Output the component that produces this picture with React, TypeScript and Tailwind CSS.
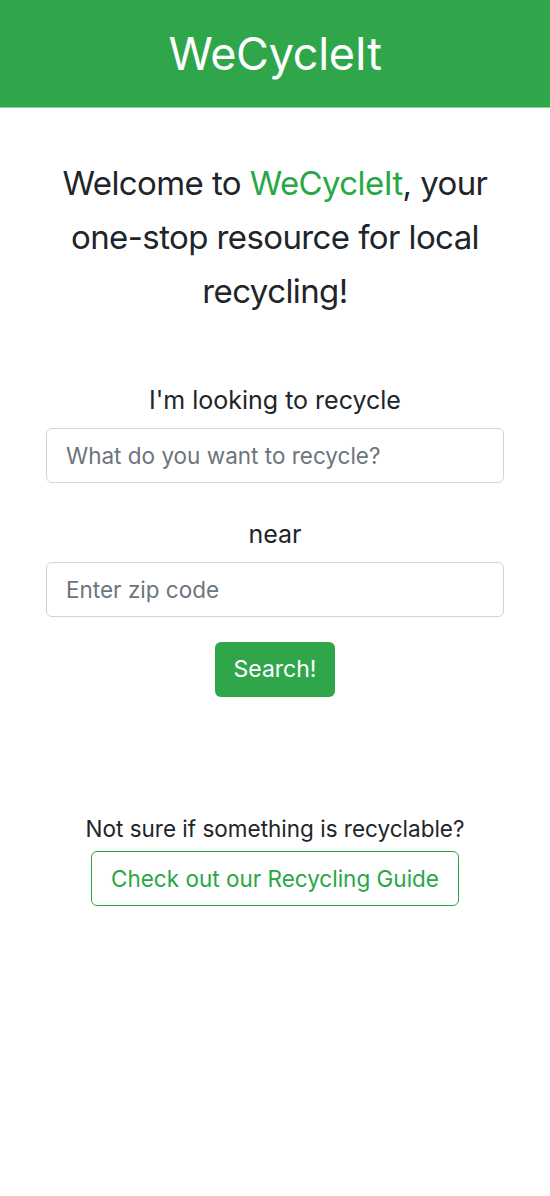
import React from 'react';

export default function App() {
  return (
    <div className="min-h-screen bg-white text-[#212529]" style={{ fontFamily: 'Inter, "Noto Sans", sans-serif' }}>
      {/* --- Header --- */}
      <header className="h-[108px] bg-[#30a64b] border-b border-[#8fd39c] flex items-center justify-center">
        <h1 className="text-[45px] text-white leading-none tracking-[-0.3px]">WeCycleIt</h1>
      </header>

      <main className="px-[46px] flex flex-col items-center text-center">
        <h2 className="mt-[48px] text-[33px] leading-[54px] tracking-[-0.6px]">
          Welcome to <span className="text-[#28a745]">WeCycleIt</span>, your one-stop resource for local recycling!
        </h2>

        <form className="w-full mt-[64px] flex flex-col items-center">
          <label className="text-[25px] leading-[36px]">I'm looking to recycle</label>
          <input
            type="text"
            placeholder="What do you want to recycle?"
            className="mt-[10px] w-full h-[55px] px-[19px] text-[22.5px] border border-[#ced4da] rounded-[6px] placeholder:text-[#6c757d] outline-none"
          />
          <label className="mt-[33px] text-[25px] leading-[36px]">near</label>
          <input
            type="text"
            placeholder="Enter zip code"
            className="mt-[10px] w-full h-[55px] px-[19px] text-[22.5px] border border-[#ced4da] rounded-[6px] placeholder:text-[#6c757d] outline-none"
          />
          <button
            type="button"
            className="mt-[25px] h-[55px] px-[19px] bg-[#30a64b] text-white text-[23px] rounded-[6px]"
          >
            Search!
          </button>
        </form>

        {/* --- Guide link --- */}
        <p className="mt-[116px] text-[22.5px] leading-[32px]">Not sure if something is recyclable?</p>
        <button
          type="button"
          className="mt-[6px] h-[55px] px-[19px] border border-[#28a745] text-[#28a745] text-[22.5px] rounded-[6px]"
        >
          Check out our Recycling Guide
        </button>
      </main>
    </div>
  );
}
